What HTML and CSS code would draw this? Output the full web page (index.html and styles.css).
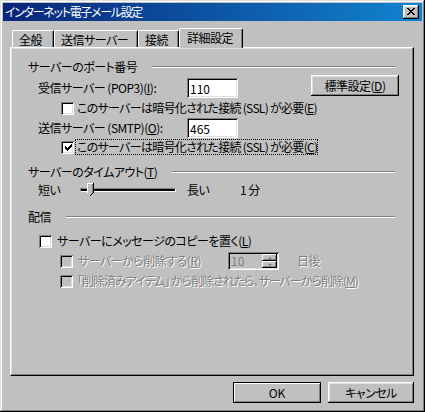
FILE: index.html
```html
<!DOCTYPE html>
<html lang="ja">
<head>
<meta charset="utf-8">
<title>インターネット電子メール設定</title>
<link rel="stylesheet" href="styles.css">
</head>
<body>
<div class="window">
  <div class="titlebar">
    <span class="title">インターネット電子メール設定</span>
    <button class="close" aria-label="閉じる">
      <svg width="8" height="7" viewBox="0 0 8 7" shape-rendering="crispEdges"><path d="M0 0h2v1h-2zM6 0h2v1h-2zM1 1h2v1h-2zM5 1h2v1h-2zM2 2h4v1h-4zM3 3h2v1h-2zM2 4h4v1h-4zM1 5h2v1h-2zM5 5h2v1h-2zM0 6h2v1h-2zM6 6h2v1h-2z" fill="#000"/></svg>
    </button>
  </div>
  <div class="content">
    <div class="tabs">
      <div class="tab t1">全般</div>
      <div class="tab t2">送信サーバー</div>
      <div class="tab t3">接続</div>
      <div class="tab t4 selected">詳細設定</div>
    </div>
    <div class="panel">
      <div class="group-head"><span>サーバーのポート番号</span><i class="rule"></i></div>
      <div class="field-row first">
        <span class="field-label">受信サーバー (POP3)(<u>I</u>):</span>
        <input class="edit" type="text" value="110">
        <button class="btn std">標準設定(<u>D</u>)</button>
      </div>
      <div class="ck-row port">
        <span class="ck"></span><span class="ck-label">このサーバーは暗号化された接続 (SSL) が必要(<u>E</u>)</span>
      </div>
      <div class="field-row second">
        <span class="field-label">送信サーバー (SMTP)(<u>O</u>):</span>
        <input class="edit" type="text" value="465">
      </div>
      <div class="ck-row port ck2">
        <span class="ck"><svg width="7" height="7" viewBox="0 0 7 7" shape-rendering="crispEdges"><path d="M6 0h1v1h-1zM5 1h2v1h-2zM0 2h1v1h-1zM4 2h3v1h-3zM0 3h2v1h-2zM3 3h3v1h-3zM0 4h5v1h-5zM1 5h3v1h-3zM2 6h1v1h-1z" fill="#000"/></svg></span><span class="ck-label focus">このサーバーは暗号化された接続 (SSL) が必要(<u>C</u>)</span>
      </div>

      <div class="group-head g2"><span>サーバーのタイムアウト(<u>T</u>)</span><i class="rule"></i></div>
      <div class="slider-row">
        <span class="s-short">短い</span>
        <div class="slider">
          <div class="track"></div>
          <svg class="thumb" width="7" height="13" viewBox="0 0 7 13" shape-rendering="crispEdges">
            <path d="M0 0h7v10l-3 3h-1l-3-3z" fill="#c0c0c0"/>
            <path d="M0 0h6v1h-5v9h-1z" fill="#fff"/>
            <path d="M5 1h1v9h-1z" fill="#808080"/>
            <path d="M6 0h1v10h-1zM5 10h1v1h-1zM4 11h1v1h-1zM3 12h1v1h-1z" fill="#000"/>
          </svg>
        </div>
        <span class="s-long">長い</span>
        <span class="s-val">1 分</span>
      </div>

      <div class="group-head g3"><span>配信</span><i class="rule"></i></div>
      <div class="ck-row deliver">
        <span class="ck"></span><span class="ck-label">サーバーにメッセージのコピーを置く(<u>L</u>)</span>
      </div>
      <div class="ck-row sub spin-row">
        <span class="ck off"></span><span class="ck-label dis r-label">サーバーから削除する(<u>R</u>)</span>
        <div class="spin">
          <span class="spin-val">10</span>
          <span class="spin-btns"><span class="sb"><i class="arr up"></i></span><span class="sb"><i class="arr down"></i></span></span>
        </div>
        <span class="dis days">日後</span>
      </div>
      <div class="ck-row sub m-row">
        <span class="ck off"></span><span class="ck-label dis m-label">「削除済みアイテム」 から削除されたら、サーバーから削除(<u>M</u>)</span>
      </div>
    </div>
    <div class="actions">
      <button class="btn default">OK</button>
      <button class="btn cancel">キャンセル</button>
    </div>
  </div>
</div>
</body>
</html>
```
FILE: styles.css
```css
* { box-sizing: border-box; }

body {
  margin: 0;
  background: #c0c0c0;
  font-family: "Noto Sans CJK JP", "DejaVu Sans", sans-serif;
  font-size: 12px;
  line-height: 14px;
  font-feature-settings: "palt";
  letter-spacing: -0.5px;
  color: #000;
}

u { text-decoration: underline; text-underline-offset: 1px; }

.window {
  width: 425px;
  height: 412px;
  padding: 3px;
  background: #c0c0c0;
  box-shadow: inset -1px -1px #000, inset 1px 1px #dfdfdf, inset -2px -2px #808080, inset 2px 2px #fff;
  display: flex;
  flex-direction: column;
}

.titlebar {
  height: 18px;
  background: linear-gradient(to right, #0a2478, #1084d0);
  display: flex;
  align-items: center;
  justify-content: space-between;
  padding: 0 3px 0 2px;
  color: #fff;
}

.title { font-size: 12px; line-height: 14px; letter-spacing: -1.3px; }

.close {
  width: 16px;
  height: 14px;
  border: 0;
  padding: 0;
  background: #c0c0c0;
  box-shadow: inset -1px -1px #000, inset 1px 1px #fff, inset -2px -2px #808080, inset 2px 2px #dfdfdf;
  display: flex;
  align-items: center;
  justify-content: center;
}

.close svg { display: block; margin: 0 1px 1px 0; }

.content {
  flex: 1;
  padding: 7px 8px 0 7px;
  display: flex;
  flex-direction: column;
}

.tabs {
  height: 19px;
  display: flex;
  align-items: flex-end;
  padding-left: 2px;
}

.tab {
  height: 17px;
  padding: 2px 0 0 6px;
  border-top: 1px solid #fff;
  border-left: 1px solid #fff;
  border-right: 1px solid #000;
  border-radius: 2px 2px 0 0;
  box-shadow: inset -1px 0 #808080;
  background: #c0c0c0;
  white-space: nowrap;
}

.t1 { width: 42px; }
.t2 { width: 84px; }
.t3 { width: 41px; }
.t4 { width: 64px; }

.tab.selected {
  position: relative;
  z-index: 1;
  height: 20px;
  margin-bottom: -1px;
  padding: 2px 0 0 7px;
}

.panel {
  width: 404px;
  height: 329px;
  border: 1px solid;
  border-color: #fff #000 #000 #fff;
  box-shadow: inset -1px -1px #808080, inset 1px 1px #dfdfdf;
  padding: 12px 18px 0 17px;
  display: flex;
  flex-direction: column;
}

.group-head {
  height: 14px;
  display: flex;
  align-items: center;
  white-space: nowrap;
}

.group-head .rule {
  flex: 1;
  height: 2px;
  margin-left: 15px;
  border-top: 1px solid #808080;
  border-bottom: 1px solid #fff;
}

.g2 { margin-top: 11px; }
.g3 { margin-top: 13px; }

.field-row {
  height: 20px;
  display: flex;
  align-items: center;
  padding-left: 10px;
}

.field-row.first { margin-top: 4px; }
.field-row.second { margin-top: 3px; }

.field-label {
  width: 149px;
  white-space: nowrap;
}

.edit {
  width: 51px;
  height: 20px;
  border: 0;
  margin: 0;
  padding: 0 3px;
  font: inherit;
  font-feature-settings: "palt";
  letter-spacing: 0;
  color: #000;
  background: #fff;
  box-shadow: inset 1px 1px #808080, inset -1px -1px #fff, inset 2px 2px #000, inset -2px -2px #dfdfdf;
  outline: none;
}

.btn {
  border: 0;
  padding: 0;
  margin: 0;
  font: inherit;
  font-feature-settings: "palt";
  letter-spacing: -0.5px;
  color: #000;
  background: #c0c0c0;
  box-shadow: inset -1px -1px #000, inset 1px 1px #fff, inset -2px -2px #808080, inset 2px 2px #dfdfdf;
}

.btn.std {
  width: 88px;
  height: 21px;
  align-self: flex-start;
  margin: -3px -4px 0 auto;
}

.ck-row {
  height: 14px;
  display: flex;
  align-items: center;
  white-space: nowrap;
}

.ck-row.port { margin-top: 3px; padding-left: 33px; }
.ck-row.port .ck-label { margin-left: 3px; }
.ck-row.port .ck-label { letter-spacing: -0.7px; }
.ck-row.ck2 { margin-top: 2px; }

.ck-row.deliver { margin-top: 10px; padding-left: 11px; }
.ck-row.deliver .ck-label { margin-left: 5px; }

.ck-row.sub { padding-left: 32px; }
.ck-row.sub .ck-label { margin-left: 5px; }

.spin-row { height: 18px; margin-top: 4px; }
.m-row { margin-top: 4px; }
.ck-row.sub .m-label { letter-spacing: -1px; margin-left: 4px; }

.ck {
  flex: none;
  width: 13px;
  height: 13px;
  background: #fff;
  box-shadow: inset 1px 1px #808080, inset -1px -1px #fff, inset 2px 2px #000, inset -2px -2px #dfdfdf;
  display: flex;
  align-items: center;
  justify-content: center;
}

.ck svg { display: block; margin: 1px 0 0 1px; }

.ck.off { background: #c0c0c0; }

.ck-row.port .ck-label.focus {
  margin-left: 2px;
  outline: 1px dotted #000;
  outline-offset: 0;
  border-left: 1px solid transparent;
}

.dis {
  color: #808080;
  text-shadow: 1px 1px #fff;
}

.r-label { width: 150px; }

.spin {
  width: 51px;
  height: 18px;
  background: #c0c0c0;
  box-shadow: inset 1px 1px #808080, inset -1px -1px #fff, inset 2px 2px #000, inset -2px -2px #dfdfdf;
  display: flex;
  align-items: center;
  justify-content: space-between;
  padding: 2px 2px 2px 3px;
}

.spin-val { color: #808080; letter-spacing: 0; }

.spin-btns {
  width: 15px;
  height: 14px;
  display: flex;
  flex-direction: column;
}

.sb {
  flex: 1;
  background: #c0c0c0;
  box-shadow: inset -1px -1px #000, inset 1px 1px #fff, inset -2px -2px #808080;
  display: flex;
  align-items: center;
  justify-content: center;
}

.arr {
  width: 0;
  height: 0;
  border-left: 2px solid transparent;
  border-right: 2px solid transparent;
}

.arr.up { border-bottom: 2px solid #808080; }
.arr.down { border-top: 2px solid #808080; }

.days { margin-left: 18px; }

.slider-row {
  height: 14px;
  margin-top: 4px;
  padding-left: 10px;
  display: flex;
  align-items: center;
  white-space: nowrap;
}

.s-short { width: 42px; }

.slider {
  position: relative;
  width: 96px;
  height: 14px;
  display: flex;
  align-items: center;
}

.track {
  width: 96px;
  height: 4px;
  border-top: 1px solid #808080;
  border-left: 1px solid #808080;
  border-bottom: 1px solid #fff;
  border-right: 1px solid #fff;
  background: #000;
}

.thumb {
  position: absolute;
  left: 7px;
  top: 0;
  display: block;
}

.s-long { margin-left: 11px; width: 53px; }

.actions {
  margin-top: 6px;
  display: flex;
  justify-content: flex-end;
  gap: 7px;
}

.btn.default {
  width: 88px;
  height: 21px;
  letter-spacing: 0;
  box-shadow: inset 0 0 0 1px #000, inset 2px 2px #fff, inset -2px -2px #808080;
}

.btn.cancel {
  width: 86px;
  height: 21px;
}
```
